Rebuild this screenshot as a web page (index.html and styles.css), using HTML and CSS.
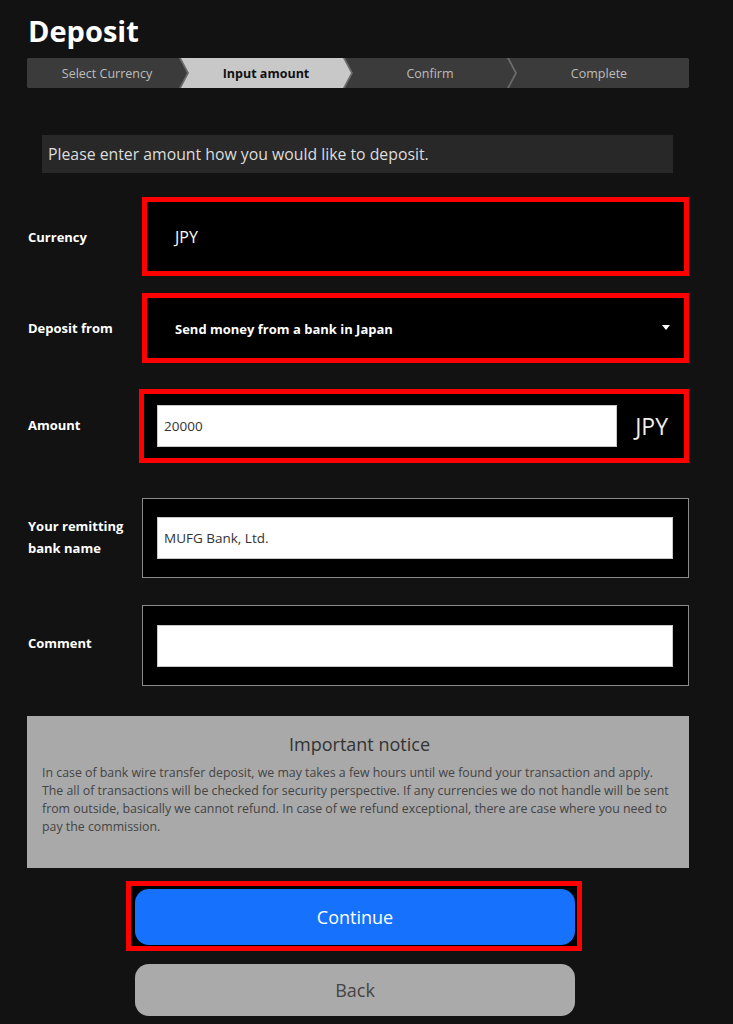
FILE: index.html
```html
<!DOCTYPE html>
<html lang="en">
<head>
  <meta charset="UTF-8" />
  <meta name="viewport" content="width=device-width, initial-scale=1.0"/>
  <title>Deposit</title>
  <link rel="stylesheet" href="styles.css">
</head>
<body>

<div class="page">
  <h1 class="title">Deposit</h1>

  <div class="steps">
    <div class="step">Select Currency</div>
    <div class="step active">Input amount</div>
    <div class="step">Confirm</div>
    <div class="step">Complete</div>
  </div>

  <div class="intro">Please enter amount how you would like to deposit.</div>

  <form class="deposit-form">
    <div class="row row-currency">
      <label>Currency</label>
      <div class="box box-red box-currency">JPY</div>
    </div>

    <div class="row row-from">
      <label>Deposit from</label>
      <div class="box box-red box-from">
        <span>Send money from a bank in Japan</span>
        <span class="caret"></span>
      </div>
    </div>

    <div class="row row-amount">
      <label>Amount</label>
      <div class="box box-red box-amount">
        <input type="text" name="amount" value="20000">
        <span class="unit">JPY</span>
      </div>
    </div>

    <div class="row row-bank">
      <label>Your remitting<br>bank name</label>
      <div class="box box-gray">
        <input type="text" name="bank" value="MUFG Bank, Ltd.">
      </div>
    </div>

    <div class="row row-comment">
      <label>Comment</label>
      <div class="box box-gray">
        <input type="text" name="comment">
      </div>
    </div>

    <div class="notice">
      <h3>Important notice</h3>
      <p>In case of bank wire transfer deposit, we may takes a few hours until we found your transaction and apply. The all of transactions will be checked for security perspective. If any currencies we do not handle will be sent from outside, basically we cannot refund. In case of we refund exceptional, there are case where you need to pay the commission.</p>
    </div>

    <div class="actions">
      <div class="continue-wrap">
        <button type="submit" class="btn btn-continue">Continue</button>
      </div>
      <button type="button" class="btn btn-back">Back</button>
    </div>
  </form>
</div>

</body>
</html>
```

FILE: styles.css
```css
* {
  box-sizing: border-box;
}

body {
  margin: 0;
  font-family: 'Open Sans', sans-serif;
  background: #121212;
  color: #fff;
}

.page {
  padding: 8px 44px 0 27px;
}

.title {
  margin: 0 0 4px 1px;
  font-size: 29px;
  font-weight: 700;
  line-height: 46px;
}

/* progress bar with chevron steps */
.steps {
  display: flex;
  height: 30px;
  background: #6b6b6b;
  border-radius: 3px;
  overflow: hidden;
}

.step {
  flex: 0 0 170px;
  display: flex;
  align-items: center;
  justify-content: center;
  background: #3b3b3b;
  color: #bdbdbd;
  font-size: 12.5px;
  margin-left: -6px;
  clip-path: polygon(0 0, calc(100% - 8px) 0, 100% 50%, calc(100% - 8px) 100%, 0 100%, 8px 50%);
}

.step:first-child {
  flex-basis: 160px;
  margin-left: 0;
  clip-path: polygon(0 0, calc(100% - 8px) 0, 100% 50%, calc(100% - 8px) 100%, 0 100%);
}

.step:last-child {
  flex: 1;
  clip-path: polygon(0 0, 100% 0, 100% 100%, 0 100%, 8px 50%);
}

.step.active {
  background: #c8c8c8;
  color: #111;
  font-weight: 700;
}

.intro {
  margin: 47px 16px 0 15px;
  height: 38px;
  padding: 0 6px;
  background: #282828;
  color: #ddd;
  font-size: 15.8px;
  display: flex;
  align-items: center;
}

.deposit-form {
  margin-top: 24px;
}

.row {
  display: grid;
  grid-template-columns: 115px 1fr;
  align-items: center;
}

.row label {
  font-size: 13px;
  font-weight: 700;
  line-height: 22px;
  padding-left: 1px;
}

.row-from { margin-top: 17px; }
.row-amount { margin-top: 26px; grid-template-columns: 112px 1fr; }
.row-bank { margin-top: 35px; }
.row-comment { margin-top: 27px; }

.row-amount label,
.row-bank label {
  margin-top: -3px;
}

.row-comment label {
  margin-top: -6px;
}

.box {
  background: #000;
  display: flex;
  align-items: center;
}

.box-red {
  border: 5px solid #ff0000;
}

.box-currency {
  height: 79px;
  padding-left: 28px;
  font-size: 16px;
}

.box-from {
  height: 70px;
  padding: 2px 14px 0 28px;
  justify-content: space-between;
  font-size: 13px;
  font-weight: 700;
}

.caret {
  width: 0;
  height: 0;
  border-left: 4px solid transparent;
  border-right: 4px solid transparent;
  border-top: 5px solid #fff;
  margin-bottom: 3px;
}

.box-amount {
  height: 74px;
  padding: 0 16px 0 13px;
  gap: 18px;
}

.box-amount .unit {
  font-size: 23px;
  color: #eee;
}

.box-gray {
  height: 80px;
  border: 1px solid #8a8a8a;
  padding: 0 15px 0 14px;
}

.row-comment .box-gray {
  height: 81px;
}

.box input {
  flex: 1;
  min-width: 0;
  height: 42px;
  border: 1px solid #c9c9c9;
  background: #fff;
  padding: 0 6px;
  font-family: 'Open Sans', sans-serif;
  font-size: 13.5px;
  color: #333;
}

.notice {
  margin-top: 30px;
  height: 152px;
  background: #a9a9a9;
  padding: 15px 12px 0 15px;
  color: #3a3a3a;
}

.notice h3 {
  margin: 0 0 7px;
  text-align: center;
  font-size: 18px;
  font-weight: 400;
  line-height: 26px;
  color: #333;
}

.notice p {
  margin: 0;
  font-size: 12.35px;
  line-height: 18px;
  color: #444;
}

.actions {
  display: flex;
  flex-direction: column;
  align-items: center;
  margin-top: 13px;
  padding-bottom: 8px;
}

.continue-wrap {
  width: 456px;
  margin-left: -8px;
  border: 5px solid #ff0000;
  background: #000;
  padding: 3px 2px 1px 4px;
}

.btn {
  display: block;
  border: none;
  border-radius: 14px;
  font-family: 'Open Sans', sans-serif;
  font-size: 18px;
  cursor: pointer;
}

.btn-continue {
  width: 100%;
  height: 56px;
  background: #1672fc;
  color: #fff;
}

.btn-back {
  width: 440px;
  height: 52px;
  margin-top: 13px;
  margin-left: -6px;
  background: #aaa;
  color: #444;
}
```
